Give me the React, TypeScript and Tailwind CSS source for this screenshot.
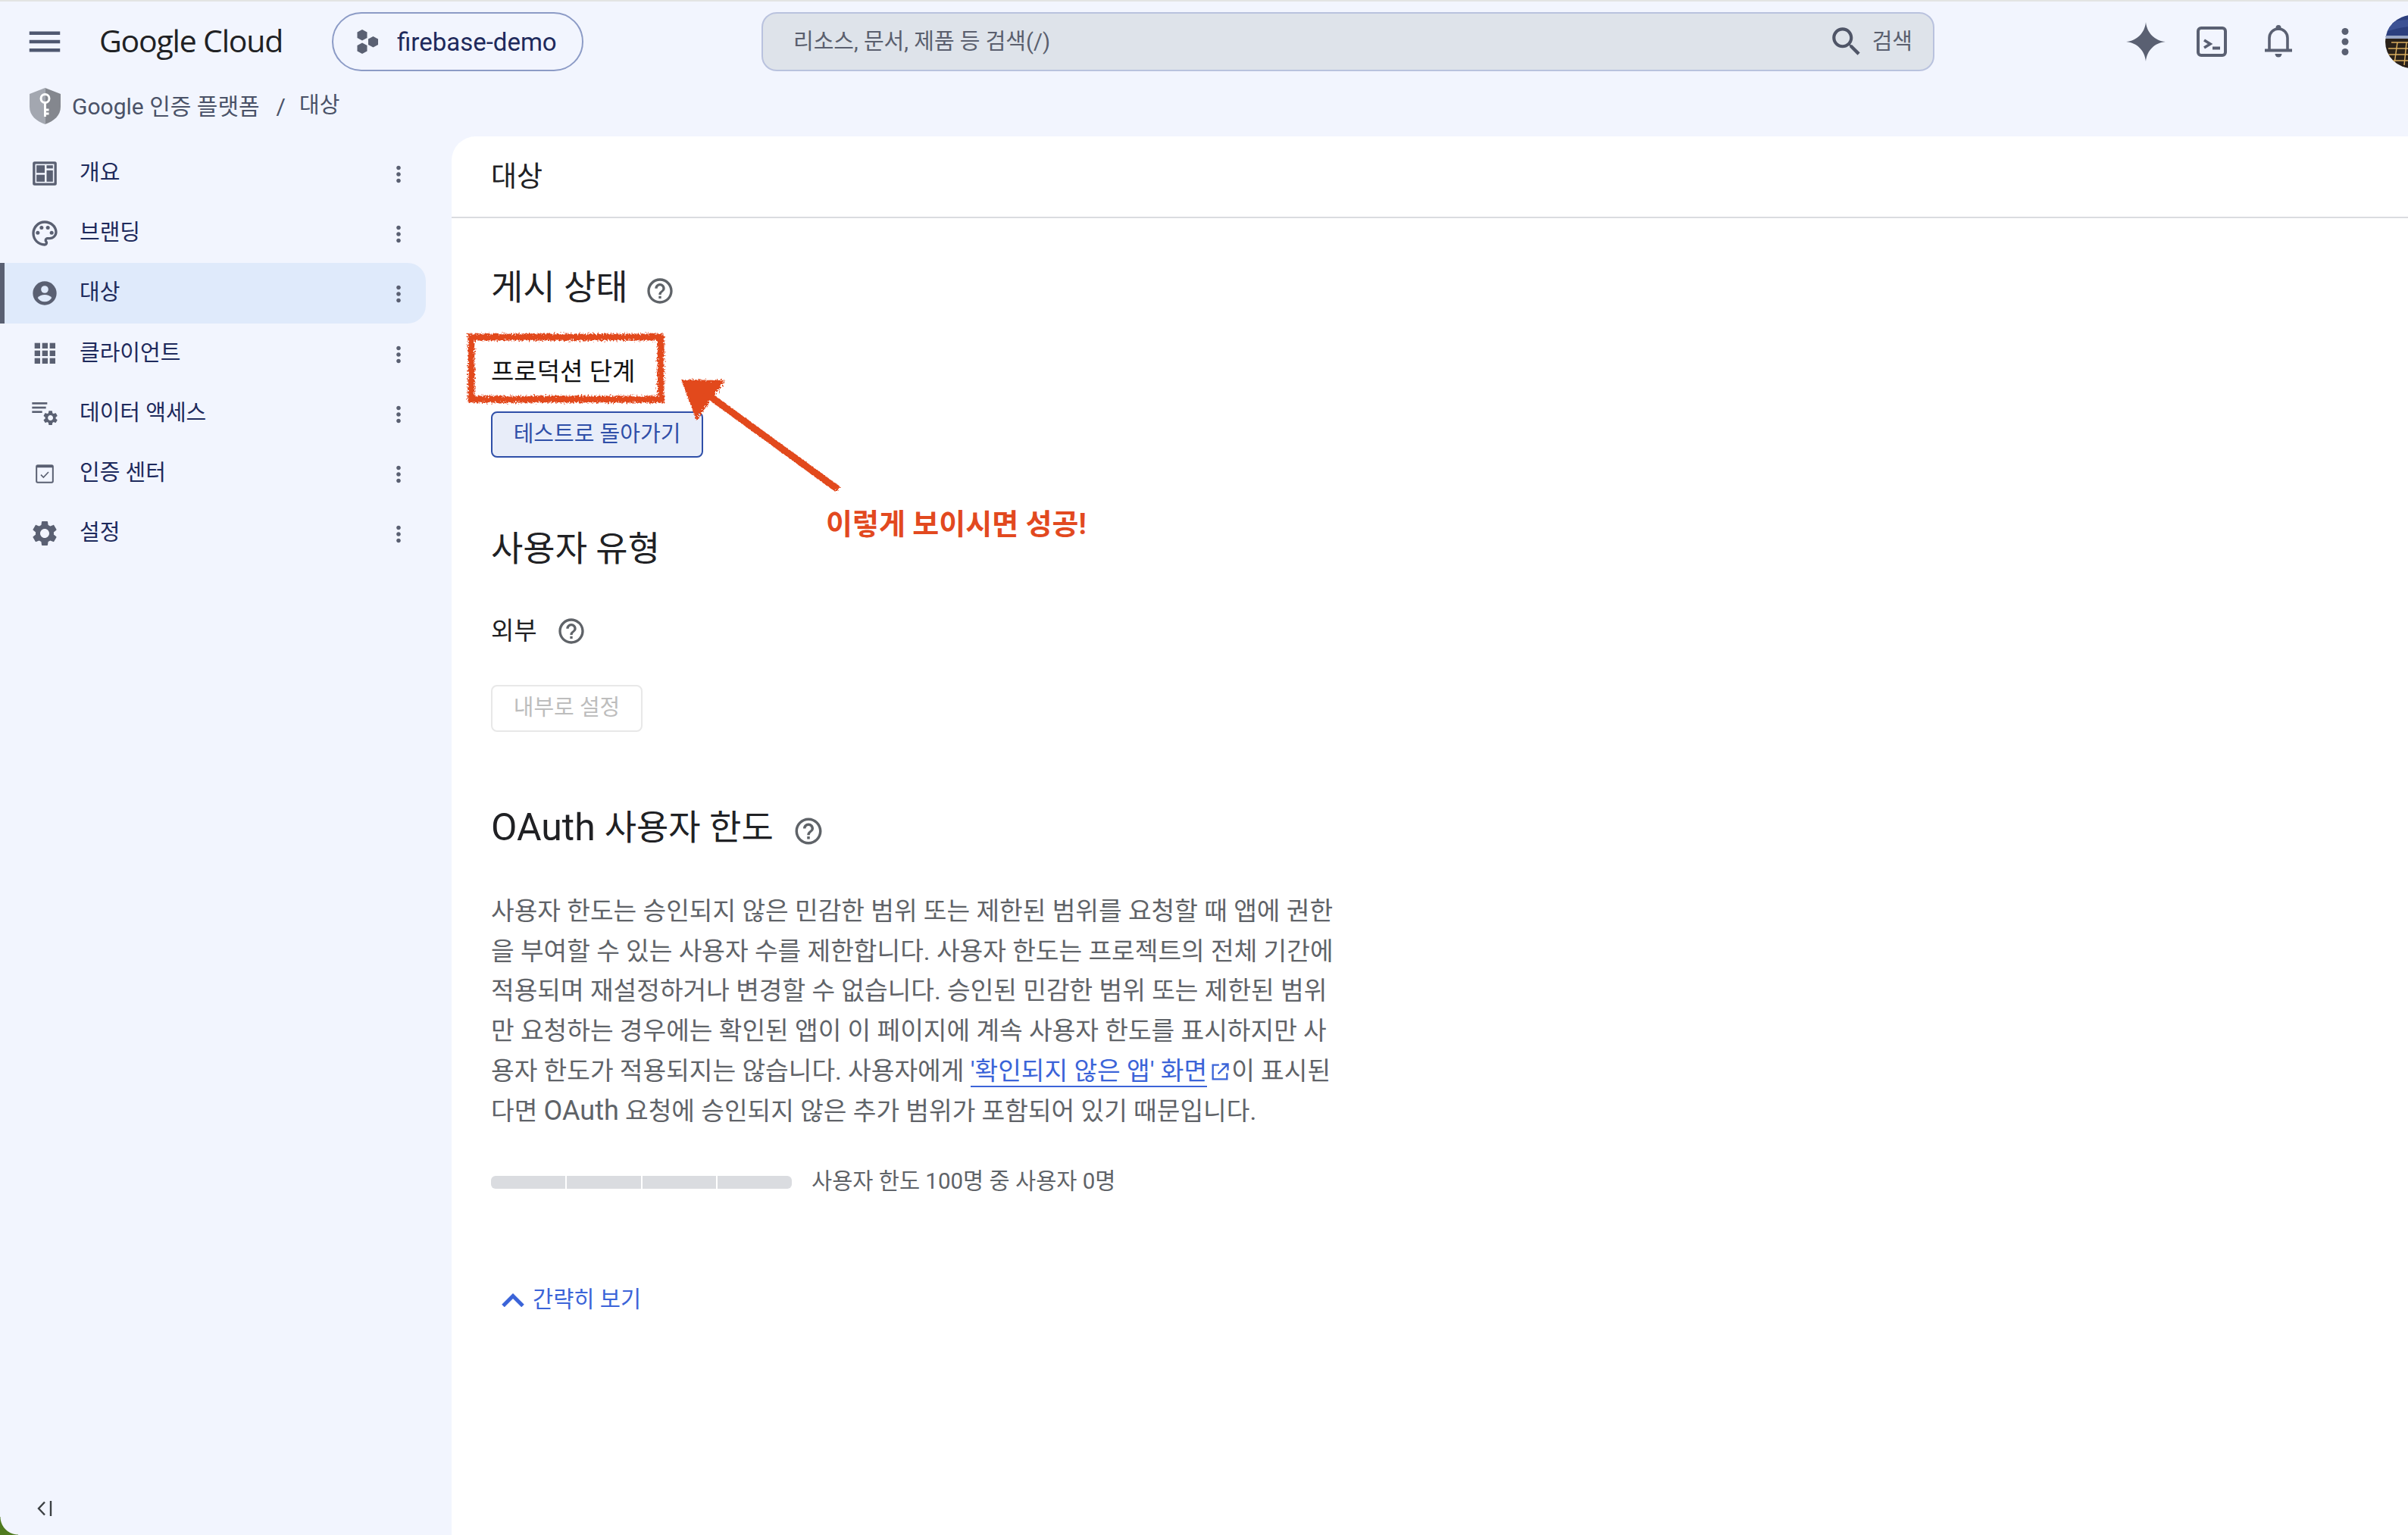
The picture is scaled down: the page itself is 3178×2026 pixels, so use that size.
import type { ReactNode } from 'react';

const ICON = '#5a6072';

function MoreVert({ className }: { className: string }) {
  return (
    <svg viewBox="0 0 24 24" className={className} fill="currentColor">
      <path d="M12 8c1.1 0 2-.9 2-2s-.9-2-2-2-2 .9-2 2 .9 2 2 2zm0 2c-1.1 0-2 .9-2 2s.9 2 2 2 2-.9 2-2-.9-2-2-2zm0 6c-1.1 0-2 .9-2 2s.9 2 2 2 2-.9 2-2-.9-2-2-2z" />
    </svg>
  );
}

function Help({ className }: { className: string }) {
  return (
    <svg viewBox="0 0 24 24" className={className} fill="#5f6368">
      <path d="M11 18h2v-2h-2v2zm1-16C6.48 2 2 6.48 2 12s4.48 10 10 10 10-4.48 10-10S17.52 2 12 2zm0 18c-4.41 0-8-3.59-8-8s3.59-8 8-8 8 3.59 8 8-3.59 8-8 8zm0-14c-2.21 0-4 1.79-4 4h2c0-1.1.9-2 2-2s2 .9 2 2c0 2-3 1.75-3 5h2c0-2.25 3-2.5 3-5 0-2.21-1.79-4-4-4z" />
    </svg>
  );
}

const GEAR =
  'M19.14 12.94c.04-.3.06-.61.06-.94 0-.32-.02-.64-.07-.94l2.03-1.58c.18-.14.23-.41.12-.61l-1.92-3.32c-.12-.22-.37-.29-.59-.22l-2.39.96c-.5-.38-1.03-.7-1.62-.94l-.36-2.54c-.04-.24-.24-.41-.48-.41h-3.84c-.24 0-.43.17-.47.41l-.36 2.54c-.59.24-1.13.57-1.62.94l-2.39-.96c-.22-.08-.47 0-.59.22L2.74 8.87c-.12.21-.08.47.12.61l2.03 1.58c-.05.3-.09.63-.09.94s.02.64.07.94l-2.03 1.58c-.18.14-.23.41-.12.61l1.92 3.32c.12.22.37.29.59.22l2.39-.96c.5.38 1.03.7 1.62.94l.36 2.54c.05.24.24.41.48.41h3.84c.24 0 .44-.17.47-.41l.36-2.54c.59-.24 1.13-.56 1.62-.94l2.39.96c.22.08.47 0 .59-.22l1.92-3.32c.12-.22.07-.47-.12-.61l-2.01-1.58zM12 15.6c-1.98 0-3.6-1.62-3.6-3.6s1.62-3.6 3.6-3.6 3.6 1.62 3.6 3.6-1.62 3.6-3.6 3.6z';

const navIcons: Record<string, ReactNode> = {
  overview: (
    <>
      <rect x="2.5" y="2.5" width="19" height="19" rx="1.5" fill={ICON} />
      <rect x="4.5" y="4.5" width="15" height="15" fill="#f2f5fe" />
      <rect x="5.5" y="5.5" width="6.5" height="6" fill={ICON} />
      <rect x="5.5" y="13" width="6.5" height="5.5" fill={ICON} />
      <rect x="13.5" y="5.5" width="5" height="2.5" fill={ICON} />
      <rect x="13.5" y="9.5" width="5" height="9" fill={ICON} />
    </>
  ),
  branding: (
    <>
      <path
        fill={ICON}
        d="M12 22C6.49 22 2 17.51 2 12S6.49 2 12 2s10 4.04 10 9c0 3.31-2.69 6-6 6h-1.77c-.28 0-.5.22-.5.5 0 .12.05.23.13.33.41.47.64 1.06.64 1.67 0 1.38-1.12 2.5-2.5 2.5zm0-18c-4.41 0-8 3.59-8 8s3.59 8 8 8c.28 0 .5-.22.5-.5 0-.16-.08-.28-.14-.35-.41-.46-.63-1.05-.63-1.65 0-1.38 1.12-2.5 2.5-2.5H16c2.21 0 4-1.79 4-4 0-3.86-3.59-7-8-7z"
      />
      <circle cx="6.5" cy="11.5" r="1.5" fill={ICON} />
      <circle cx="9.5" cy="7.5" r="1.5" fill={ICON} />
      <circle cx="14.5" cy="7.5" r="1.5" fill={ICON} />
      <circle cx="17.5" cy="11.5" r="1.5" fill={ICON} />
    </>
  ),
  audience: (
    <>
      <circle cx="12" cy="12" r="9.4" fill={ICON} />
      <circle cx="12" cy="9" r="2.9" fill="#dfeafb" />
      <path d="M6.4 15.6c1.3-1.5 3.4-2.4 5.6-2.4s4.3.9 5.6 2.4c-1.3 2-3.2 3.2-5.6 3.2s-4.3-1.2-5.6-3.2z" fill="#dfeafb" />
    </>
  ),
  clients: (
    <>
      {[4, 10, 16].map((y) =>
        [4, 10, 16].map((x) => <rect key={`${x}-${y}`} x={x} y={y} width="4.4" height="4.4" fill={ICON} />),
      )}
    </>
  ),
  data: (
    <>
      <rect x="2" y="3.6" width="12" height="1.6" fill={ICON} />
      <rect x="2" y="7" width="11" height="1.6" fill={ICON} />
      <rect x="2" y="10.4" width="8" height="1.6" fill={ICON} />
      <g transform="translate(9.6 9) scale(0.58)">
        <path d={GEAR} fill={ICON} />
      </g>
    </>
  ),
  verify: (
    <>
      <rect x="5.5" y="5.5" width="13" height="13.5" rx="1" fill="none" stroke={ICON} strokeWidth="1.2" />
      <rect x="5.5" y="5.5" width="13" height="1.8" fill={ICON} />
      <path d="M9 13l2 2 4-4.2" fill="none" stroke={ICON} strokeWidth="1" />
    </>
  ),
  settings: <path d={GEAR} fill={ICON} />,
};

const navItems = [
  { icon: 'overview', label: '개요' },
  { icon: 'branding', label: '브랜딩' },
  { icon: 'audience', label: '대상', active: true },
  { icon: 'clients', label: '클라이언트' },
  { icon: 'data', label: '데이터 액세스' },
  { icon: 'verify', label: '인증 센터' },
  { icon: 'settings', label: '설정' },
];

function NavRow({ icon, label, active }: { icon: string; label: string; active?: boolean }) {
  return (
    <div
      className={
        active
          ? 'flex h-[79.2px] w-[562px] items-center rounded-r-[24px] border-l-[6px] border-[#5a6072] bg-[#dfeafb] pl-[33px] text-[#1e2a5c]'
          : 'flex h-[79.2px] w-[562px] items-center pl-[39px] text-[#1e2a5c]'
      }
    >
      <svg viewBox="0 0 24 24" className="h-[40px] w-[40px] shrink-0">
        {navIcons[icon]}
      </svg>
      <span className="ml-[26px] flex-1 text-[29px] leading-none">{label}</span>
      <MoreVert className="mr-[19px] mt-[3px] h-[34px] w-[34px] text-[#5a6072]" />
    </div>
  );
}

function Marks() {
  return (
    <svg viewBox="600 430 520 240" className="absolute left-[4px] top-[250px] h-[240px] w-[520px]">
      <defs>
        <filter id="rough" x="-10%" y="-10%" width="120%" height="120%">
          <feTurbulence type="fractalNoise" baseFrequency="0.45" numOctaves="3" seed="4" />
          <feDisplacementMap in="SourceGraphic" scale="8" />
        </filter>
      </defs>
      <g filter="url(#rough)">
        <rect x="622" y="445" width="250" height="82" fill="none" stroke="#e2491f" strokeWidth="9" />
        <polygon points="899,501 957,502 919,555" fill="#e2491f" />
        <line x1="930" y1="518" x2="1106" y2="646" stroke="#e2491f" strokeWidth="9" />
      </g>
    </svg>
  );
}

export default function App() {
  return (
    <div className="relative flex h-[2026px] w-[3178px] flex-col overflow-hidden bg-[#f2f5fe] font-['Roboto','Noto_Sans_CJK_KR',sans-serif]">
      <div className="h-[2px] bg-[#e3e4e3]" />

      {/* Top bar */}
      <header className="flex h-[106px] shrink-0 items-center pl-[32px]">
        <svg viewBox="0 0 24 24" className="h-[54px] w-[54px] shrink-0" fill="#4f5870">
          <path d="M3 18h18v-2H3v2zm0-5h18v-2H3v2zm0-7v2h18V6H3z" />
        </svg>
        <span className="ml-[45px] w-[307px] shrink-0 pb-[3px] font-['Open_Sans'] text-[41px] font-medium leading-none tracking-[-1.2px] text-[#202124]">
          Google Cloud
        </span>
        <div className="flex h-[78px] w-[332px] shrink-0 items-center rounded-[39px] border-2 border-[#8c9bc6] pl-[30px]">
          <svg viewBox="0 0 30 32" className="h-[32px] w-[30px]" fill={ICON}>
            <path d="M8 0l6.5 3.6v7.3L8 14.5 1.5 10.9V3.6z" />
            <path d="M8 17.5l6.5 3.6v7.3L8 32l-6.5-3.6v-7.3z" />
            <path d="M22.5 9l6.5 3.6v7.3L22.5 23.5 16 19.9v-7.3z" />
          </svg>
          <span className="ml-[24px] text-[33px] leading-none text-[#1e2a5c]">firebase-demo</span>
        </div>
        <div className="ml-[235px] flex h-[78px] w-[1548px] shrink-0 items-center rounded-[20px] border-2 border-[#b9c2de] bg-[#dee3ea] pl-[40px] pr-[27px] text-[#5a5f6e]">
          <span className="flex-1 text-[29px] leading-none">리소스, 문서, 제품 등 검색(/)</span>
          <svg viewBox="0 0 24 24" className="h-[50px] w-[50px]" fill="#4f5567">
            <path d="M15.5 14h-.79l-.28-.27C15.41 12.59 16 11.11 16 9.5 16 5.91 13.09 3 9.5 3S3 5.91 3 9.5 5.91 16 9.5 16c1.61 0 3.09-.59 4.23-1.57l.27.28v.79l5 4.99L20.49 19l-4.99-5zm-6 0C7.01 14 5 11.99 5 9.5S7.01 5 9.5 5 14 7.01 14 9.5 11.99 14 9.5 14z" />
          </svg>
          <span className="ml-[9px] text-[29px] leading-none">검색</span>
        </div>
        <svg viewBox="0 0 24 24" className="ml-[252px] h-[54px] w-[54px] shrink-0" fill={ICON}>
          <path d="M12 .5C12.7 6.9 17.1 11.3 23.5 12 17.1 12.7 12.7 17.1 12 23.5 11.3 17.1 6.9 12.7 .5 12 6.9 11.3 11.3 6.9 12 .5z" />
        </svg>
        <svg viewBox="0 0 40 40" className="ml-[40px] h-[40px] w-[40px] shrink-0" fill="none" stroke={ICON}>
          <rect x="2" y="2" width="36" height="36" rx="4" strokeWidth="4" />
          <path d="M10 18l8 5-8 5" strokeWidth="3.6" />
          <path d="M21 28.5h10" strokeWidth="4" />
        </svg>
        <svg viewBox="0 0 36 44" className="ml-[50px] h-[44px] w-[36px] shrink-0" fill="none" stroke={ICON}>
          <path d="M6 33V17a12 12 0 0 1 24 0v16" strokeWidth="3.6" />
          <path d="M0 33.5h36" strokeWidth="4" />
          <circle cx="18" cy="3.5" r="3.5" fill={ICON} stroke="none" />
          <path d="M13.5 38h9a4.5 4.5 0 0 1-9 0z" fill={ICON} stroke="none" />
        </svg>
        <svg viewBox="0 0 10 36" className="ml-[65px] h-[36px] w-[10px] shrink-0" fill={ICON}>
          <circle cx="5" cy="4.5" r="4.5" />
          <circle cx="5" cy="18" r="4.5" />
          <circle cx="5" cy="31.5" r="4.5" />
        </svg>
        <svg viewBox="0 0 70 70" className="ml-[48px] h-[70px] w-[70px] shrink-0 rounded-full">
          <rect width="70" height="29" fill="#2c3f7e" />
          <path d="M0 12c20-8 40-8 70 0v6c-25-6-45-4-70 4z" fill="#3d5294" />
          <rect y="27" width="70" height="4" fill="#9aa6c4" />
          <rect y="31" width="70" height="39" fill="#2a2119" />
          <path d="M8 36h62M4 44h66M3 52h67M8 60h62M16 36l-4 28M28 36l-3 30M40 36l-2 30M52 36v30" stroke="#d9ad5f" strokeWidth="1.5" fill="none" />
        </svg>
      </header>

      {/* Breadcrumb */}
      <div className="flex h-[72px] shrink-0 items-center pb-[8px] pl-[39px] text-[30px] text-[#4a5268]">
        <svg viewBox="0 0 41 48" className="h-[48px] w-[41px] shrink-0">
          <path d="M20.5 0L0 8v17c0 11 8.5 19 20.5 23z" fill="#a3a7b0" />
          <path d="M20.5 0L41 8v17c0 11-8.5 19-20.5 23z" fill="#84878e" />
          <circle cx="20.5" cy="14" r="5.5" fill="none" stroke="#fff" strokeWidth="3" />
          <path d="M20.5 19v19M20.5 29h5M20.5 34h5" stroke="#fff" strokeWidth="3" fill="none" />
        </svg>
        <span className="ml-[15px]">Google 인증 플랫폼</span>
        <span className="ml-[22px]">/</span>
        <span className="ml-[18px] text-[29px]">대상</span>
      </div>

      <div className="flex min-h-0 flex-1">
        {/* Sidebar */}
        <aside className="relative flex w-[596px] shrink-0 flex-col pt-[9px]">
          {navItems.map((item) => (
            <NavRow key={item.label} {...item} />
          ))}
          <svg viewBox="0 0 21 20" className="absolute bottom-[25px] left-[48px] h-[20px] w-[21px]" fill="none" stroke="#3c4043" strokeWidth="2.4">
            <path d="M11 1.5L3 10l8 8.5M19 0v20" />
          </svg>
        </aside>

        {/* Main */}
        <main className="relative flex-1 rounded-tl-[32px] bg-white">
          <div className="flex h-[108px] items-center border-b-2 border-[#dadce0] pl-[52px] text-[37px] leading-none text-[#202124]">
            대상
          </div>
          <div className="pl-[52px] text-[#202124]">
            <div className="mt-[61px] flex h-[60px] items-center text-[46px] leading-none">
              게시 상태
              <Help className="ml-[22px] mt-[10px] h-[40px] w-[40px]" />
            </div>
            <div className="mt-[62px] h-[40px] text-[33px] leading-[40px] text-[#111]">프로덕션 단계</div>
            <button className="mt-[32px] block h-[61px] w-[280px] rounded-[8px] border-2 border-[#2f4fa8] bg-[#e8edf9] text-[29px] leading-none text-[#2f4fa8]">
              테스트로 돌아가기
            </button>
            <div className="mt-[90px] flex h-[60px] items-center text-[46px] leading-none">사용자 유형</div>
            <div className="mt-[58px] flex h-[40px] items-center text-[33px] leading-none">
              외부
              <Help className="ml-[25px] mt-[2px] h-[40px] w-[40px]" />
            </div>
            <button className="mt-[52px] block h-[62px] w-[200px] rounded-[8px] border-2 border-[#e8e8e8] pb-[2px] text-[29px] leading-none text-[#bdbdbd]">
              내부로 설정
            </button>
            <div className="mt-[96px] flex h-[60px] items-center text-[46px] leading-none">
              <span className="mr-[12px] text-[50px]">OAuth</span>
              사용자 한도
              <Help className="ml-[25px] mt-[10px] h-[42px] w-[42px]" />
            </div>
            <p className="mt-[55px] whitespace-nowrap text-[33.35px] leading-[52.7px] text-[#5f6368]">
              사용자 한도는 승인되지 않은 민감한 범위 또는 제한된 범위를 요청할 때 앱에 권한
              <br />을 부여할 수 있는 사용자 수를 제한합니다. 사용자 한도는 프로젝트의 전체 기간에
              <br />
              적용되며 재설정하거나 변경할 수 없습니다. 승인된 민감한 범위 또는 제한된 범위
              <br />만 요청하는 경우에는 확인된 앱이 이 페이지에 계속 사용자 한도를 표시하지만 사
              <br />
              용자 한도가 적용되지는 않습니다. 사용자에게{' '}
              <a className="border-b-2 border-[#3b64d8] text-[#3b64d8]">'확인되지 않은 앱' 화면</a>
              <svg viewBox="0 0 24 24" className="ml-[3px] mr-[1px] inline-block h-[28px] w-[28px] align-[-4px]" fill="none" stroke="#3b64d8" strokeWidth="2">
                <path d="M11 4H4v16h16v-7M14 3h7v7M21 3L10 14" />
              </svg>
              이 표시된
              <br />
              다면 <span className="text-[36px] leading-none">OAuth</span> 요청에 승인되지 않은 추가 범위가 포함되어 있기 때문입니다.
            </p>
            <div className="mt-[47px] flex h-[40px] items-center">
              <div className="flex h-[17px] w-[397px] gap-[2px] overflow-hidden rounded-[6px]">
                <div className="flex-1 bg-[#dadce0]" />
                <div className="flex-1 bg-[#dadce0]" />
                <div className="flex-1 bg-[#dadce0]" />
                <div className="flex-1 bg-[#dadce0]" />
              </div>
              <span className="ml-[26px] text-[29.5px] leading-none text-[#5f6368]">사용자 한도 100명 중 사용자 0명</span>
            </div>
            <div className="ml-[14px] mt-[116px] flex h-[40px] items-center text-[29.5px] leading-none text-[#3b64d8]">
              <svg viewBox="0 0 30 18" className="h-[18px] w-[30px]" fill="none" stroke="#3b64d8" strokeWidth="5">
                <path d="M2 16.5L15 3.5l13 13" />
              </svg>
              <span className="ml-[11px]">간략히 보기</span>
            </div>
          </div>

          {/* Annotations drawn on the screenshot */}
          <Marks />
          <span className="absolute left-[494px] top-[489px] text-[38px] font-bold leading-[46px] text-[#e2491f]">
            이렇게 보이시면 성공!
          </span>
        </main>
      </div>

      {/* Wallpaper showing through the window corner */}
      <div className="absolute bottom-0 left-0 h-[24px] w-[24px] bg-[radial-gradient(circle_at_100%_0%,transparent_23px,#4f7a1f_24px)]" />
    </div>
  );
}
